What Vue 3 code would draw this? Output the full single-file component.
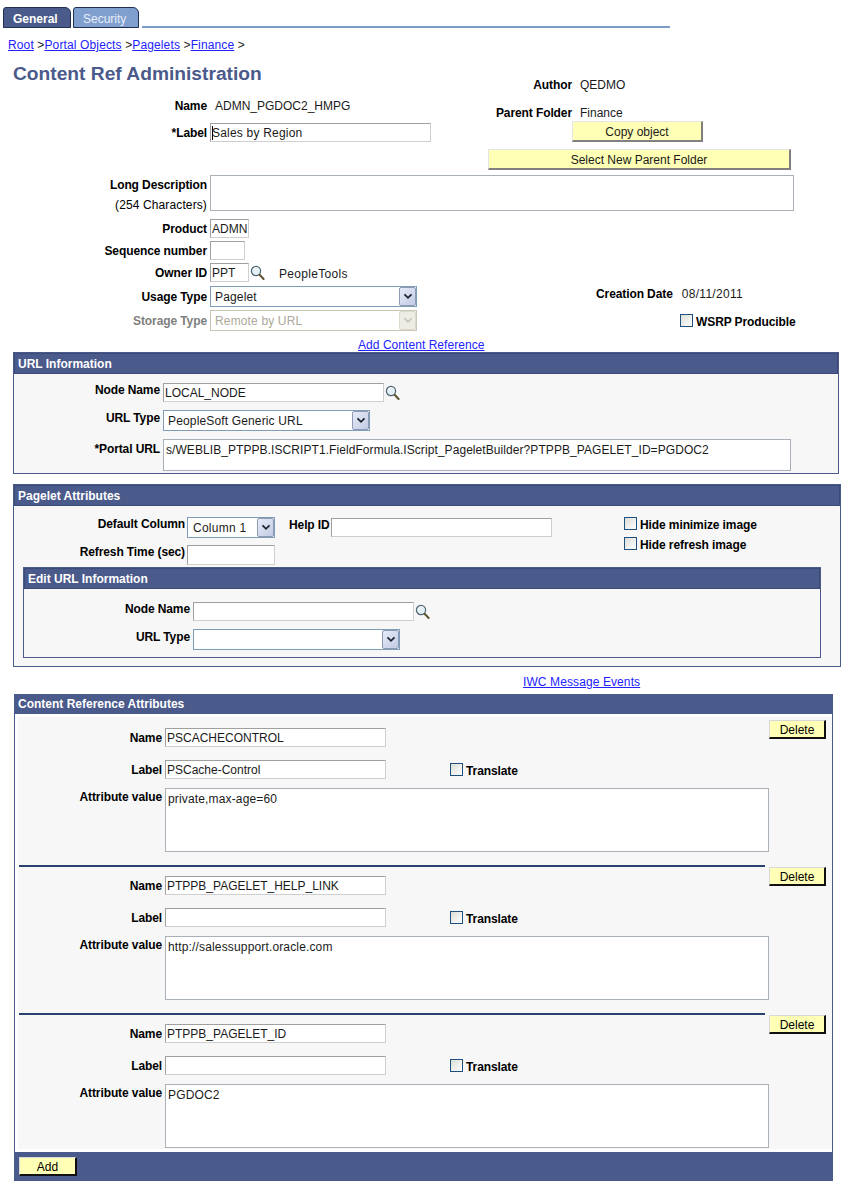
<script setup>
const groups = [
  { name: 'PSCACHECONTROL', label: 'PSCache-Control', value: 'private,max-age=60' },
  { name: 'PTPPB_PAGELET_HELP_LINK', label: '', value: 'http://salessupport.oracle.com' },
  { name: 'PTPPB_PAGELET_ID', label: '', value: 'PGDOC2' }
]
const portalUrl = 's/WEBLIB_PTPPB.ISCRIPT1.FieldFormula.IScript_PageletBuilder?PTPPB_PAGELET_ID=PGDOC2'
</script>

<template>
  <div class="page">
    <div class="tabs">
      <div class="tab active">General</div>
      <div class="tab">Security</div>
      <div class="tabline"></div>
    </div>

    <div class="crumbs">
      <a>Root</a> &gt;<a>Portal Objects</a> &gt;<a>Pagelets</a> &gt;<a>Finance</a> &gt;
    </div>

    <div class="head">
      <div class="head-left">
        <h1 class="title">Content Ref Administration</h1>
        <div class="row name-row">
          <span class="lbl">Name</span><span class="val">ADMN_PGDOC2_HMPG</span>
        </div>
        <div class="row label-row">
          <span class="lbl">*Label</span>
          <input class="inp w221 caret" value="Sales by Region" readonly />
        </div>
      </div>
      <div class="head-right">
        <div class="pair author"><span class="lbl-r">Author</span><span class="val">QEDMO</span></div>
        <div class="pair parent"><span class="lbl-r">Parent Folder</span><span class="val">Finance</span></div>
        <button class="btn copy">Copy object</button>
        <button class="btn select-parent">Select New Parent Folder</button>
      </div>
    </div>

    <div class="form-rows">
      <div class="row long">
        <span class="lbl plain">Long Description<br />(254 Characters)</span>
        <textarea class="area long-area" readonly></textarea>
      </div>
      <div class="row mt8">
        <span class="lbl">Product</span>
        <input class="inp w39" value="ADMN" readonly />
      </div>
      <div class="row mt3">
        <span class="lbl">Sequence number</span>
        <input class="inp w35" readonly />
      </div>
      <div class="row mt3">
        <span class="lbl">Owner ID</span>
        <input class="inp w39" value="PPT" readonly />
        <svg class="lens" viewBox="0 0 15 16"><circle cx="6" cy="6" r="4.6" fill="#e4f0f5" stroke="#4a6272" stroke-width="1.2" /><path d="M3.5 5a3 3 0 0 1 3-2.4" fill="none" stroke="#fff" /><path d="M9.6 9.8 13.6 14" stroke="#5c5330" stroke-width="2" stroke-linecap="round" /></svg>
        <span class="val owner">PeopleTools</span>
      </div>
      <div class="row mt4">
        <span class="lbl lower">Usage Type</span>
        <div class="sel w207"><span>Pagelet</span><i class="arrow"><svg viewBox="0 0 11 8"><path d="M1.5 1.5 5.5 5.5 9.5 1.5" fill="none" stroke="#1c2430" stroke-width="2" /></svg></i></div>
        <div class="created"><span class="bold">Creation Date</span><span class="val date">08/11/2011</span></div>
      </div>
      <div class="row mt3">
        <span class="lbl muted lower">Storage Type</span>
        <div class="sel w207 disabled"><span>Remote by URL</span><i class="arrow"><svg viewBox="0 0 11 8"><path d="M1.5 1.5 5.5 5.5 9.5 1.5" fill="none" stroke="#c9c7ba" stroke-width="2" /></svg></i></div>
        <label class="check wsrp"><input type="checkbox" class="cb" /><span>WSRP Producible</span></label>
      </div>
      <div class="add-link"><a>Add Content Reference</a></div>
    </div>

    <section class="box url-box">
      <div class="box-head">URL Information</div>
      <div class="url-body">
        <div class="row">
          <span class="lbl top-0">Node Name</span>
          <input class="inp w221" value="LOCAL_NODE" readonly />
          <svg class="lens tight" viewBox="0 0 15 16"><circle cx="6" cy="6" r="4.6" fill="#e4f0f5" stroke="#4a6272" stroke-width="1.2" /><path d="M3.5 5a3 3 0 0 1 3-2.4" fill="none" stroke="#fff" /><path d="M9.6 9.8 13.6 14" stroke="#5c5330" stroke-width="2" stroke-linecap="round" /></svg>
        </div>
        <div class="row mt8">
          <span class="lbl top-1">URL Type</span>
          <div class="sel w207"><span>PeopleSoft Generic URL</span><i class="arrow"><svg viewBox="0 0 11 8"><path d="M1.5 1.5 5.5 5.5 9.5 1.5" fill="none" stroke="#1c2430" stroke-width="2" /></svg></i></div>
        </div>
        <div class="row mt8">
          <span class="lbl top-3">*Portal URL</span>
          <textarea class="area portal" :value="portalUrl" readonly></textarea>
        </div>
      </div>
    </section>

    <section class="box pagelet-box">
      <div class="box-head">Pagelet Attributes</div>
      <div class="pagelet-body">
        <div class="pagelet-top">
          <div class="pagelet-fields">
            <div class="row">
              <span class="lbl top-0">Default Column</span>
              <div class="sel w88"><span>Column 1</span><i class="arrow"><svg viewBox="0 0 11 8"><path d="M1.5 1.5 5.5 5.5 9.5 1.5" fill="none" stroke="#1c2430" stroke-width="2" /></svg></i></div>
              <span class="help-lbl bold">Help ID</span>
              <input class="inp w221 help-inp" readonly />
            </div>
            <div class="row mt7">
              <span class="lbl top-0">Refresh Time (sec)</span>
              <input class="inp w88" readonly />
            </div>
          </div>
          <div class="pagelet-checks">
            <label class="check"><input type="checkbox" class="cb" /><span>Hide minimize image</span></label>
            <label class="check second"><input type="checkbox" class="cb" /><span>Hide refresh image</span></label>
          </div>
        </div>
        <section class="box edit-box">
          <div class="box-head">Edit URL Information</div>
          <div class="edit-body">
            <div class="row">
              <span class="lbl top-0">Node Name</span>
              <input class="inp w221" readonly />
              <svg class="lens tight" viewBox="0 0 15 16"><circle cx="6" cy="6" r="4.6" fill="#e4f0f5" stroke="#4a6272" stroke-width="1.2" /><path d="M3.5 5a3 3 0 0 1 3-2.4" fill="none" stroke="#fff" /><path d="M9.6 9.8 13.6 14" stroke="#5c5330" stroke-width="2" stroke-linecap="round" /></svg>
            </div>
            <div class="row mt8">
              <span class="lbl top-1">URL Type</span>
              <div class="sel w207"><span></span><i class="arrow"><svg viewBox="0 0 11 8"><path d="M1.5 1.5 5.5 5.5 9.5 1.5" fill="none" stroke="#1c2430" stroke-width="2" /></svg></i></div>
            </div>
          </div>
        </section>
      </div>
    </section>

    <div class="iwc"><a>IWC Message Events</a></div>

    <section class="attr-box">
      <div class="box-head attr-head">Content Reference Attributes</div>
      <div class="attr-body">
        <div v-for="(g, i) in groups" :key="g.name" class="group">
          <div class="group-main" :class="{ last: i === groups.length - 1 }">
            <div class="row">
              <span class="lbl">Name</span>
              <input class="inp w221" :value="g.name" readonly />
            </div>
            <div class="row mt13">
              <span class="lbl">Label</span>
              <input class="inp w221" :value="g.label" readonly />
              <label class="check translate"><input type="checkbox" class="cb" /><span>Translate</span></label>
            </div>
            <div class="row mt9">
              <span class="lbl top-2">Attribute value</span>
              <textarea class="area attr-area" :value="g.value" readonly></textarea>
            </div>
          </div>
          <button class="btn2 del" :class="{ first: i === 0 }">Delete</button>
        </div>
      </div>
      <div class="attr-foot"><button class="btn2 add">Add</button></div>
    </section>
  </div>
</template>

<style scoped>
.page {
  width: 854px;
  height: 1193px;
  background: #fff;
  color: #000;
  font: 12px/14px "Liberation Sans", Arial, sans-serif;
  overflow: hidden;
  box-sizing: border-box;
  padding-top: 7px;
}
.tabs { display: flex; height: 21px; padding-left: 3px; }
.tab {
  width: 66px;
  box-sizing: border-box;
  margin-right: 2px;
  padding: 4px 0 0 9px;
  background: #7f9fcf;
  color: #e8eef8;
  border: 1px solid #1f2f50;
  border-bottom: 1px solid #1f2f50;
  border-radius: 3px 6px 0 0;
}
.tab.active {
  width: 68px;
  background: #4a5a8a;
  color: #fff;
  font-weight: bold;
}
.tabline {
  width: 528px;
  height: 2px;
  margin: 19px 0 0 1px;
  background: #7b9cc4;
}
.crumbs { margin-top: 10px; padding-left: 8px; height: 14px; white-space: pre-wrap; color: #222; letter-spacing: .13px; }
a { color: #2222ff; text-decoration: underline; }
.add-link a { letter-spacing: .05px; }
.iwc a { letter-spacing: .1px; }
.head { display: flex; margin-top: 9px; }
.head-left { width: 488px; }
.title { margin: 0; padding: 1px 0 0 13px; font-size: 19.2px; line-height: 24px; font-weight: bold; color: #4a5a8a; }
.name-row { margin-top: 13px; height: 14px; }
.label-row { margin-top: 10px; }
.row { display: flex; align-items: center; }
.lbl {
  width: var(--lw, 207px);
  margin-right: 3px;
  flex: none;
  text-align: right;
  font-weight: bold;
  letter-spacing: -.1px;
}
.lbl.plain { line-height: 20px; align-self: flex-start; margin-top: -1px; padding-top: 1px; font-weight: normal; letter-spacing: .12px; }
.plain::first-line { font-weight: bold; letter-spacing: -.1px; }
.muted { color: #808080; }
.lower { padding-top: 1px; }
.top-0, .top-1, .top-2, .top-3 { align-self: flex-start; }
.top-1 { margin-top: 1px; }
.top-2 { margin-top: 2px; }
.top-3 { margin-top: 3px; }
.val { color: #1a1a1a; }
.name-row .val { margin-left: 5px; }
.bold { font-weight: bold; letter-spacing: -.1px; }
.inp {
  box-sizing: border-box;
  height: 19px;
  padding: 0 1px;
  margin: 0;
  border: 1px solid;
  border-color: #a0a0a0 #cfcfcf #cfcfcf #a0a0a0;
  background: #fff;
  color: #1a1a1a;
  font: 12px "Liberation Sans", Arial, sans-serif;
  outline: none;
  border-radius: 0;
}
.w221 { width: 221px; }
.w39 { width: 39px; }
.w35 { width: 35px; }
.w88 { width: 88px; height: 20px; }
.caret {
  background: linear-gradient(#000, #000) 1px 2px / 1px 14px no-repeat #fff;
  letter-spacing: .2px;
}
.head-right { width: 320px; }
.pair { display: flex; }
.lbl-r { width: 84px; text-align: right; font-weight: bold; margin-right: 8px; flex: none; letter-spacing: -.1px; }
.author { margin-top: 17px; }
.parent { margin-top: 14px; }
.btn {
  display: block;
  box-sizing: border-box;
  height: 21px;
  padding: 1px 0 0;
  background: #ffffb5;
  color: #1a1a1a;
  border: 1px solid;
  border-width: 1px 2px 2px 1px;
  border-color: #e4e4e4 #808080 #808080 #e4e4e4;
  font: 12px "Liberation Sans", Arial, sans-serif;
}
.copy { width: 131px; margin: 1px 0 0 84px; }
.select-parent { width: 303px; margin-top: 7px; }
.form-rows { margin-top: 5px; }
.long { height: 36px; }
.area {
  display: block;
  box-sizing: border-box;
  flex: none;
  margin: 0;
  padding: 1px 2px;
  resize: none;
  overflow: hidden;
  border: 1px solid #a9b0b8;
  background: #fff;
  color: #1a1a1a;
  font: 12px/16px "Liberation Sans", Arial, sans-serif;
  outline: none;
  border-radius: 0;
}
.long-area { width: 584px; height: 36px; }
.mt3 { margin-top: 3px; }
.mt4 { margin-top: 4px; }
.mt7 { margin-top: 7px; }
.mt8 { margin-top: 8px; }
.mt9 { margin-top: 9px; }
.mt13 { margin-top: 13px; }
.lens { width: 15px; height: 16px; margin-left: 1px; flex: none; }
.tight { margin-left: 1px; }
.owner { margin-left: 14px; margin-top: 2px; letter-spacing: .3px; }
.sel {
  box-sizing: border-box;
  position: relative;
  flex: none;
  height: 21px;
  border: 1px solid #7f9db9;
  background: #fff;
  color: #1a1a1a;
  line-height: 21px;
  padding-left: 4px;
  display: flex;
  justify-content: space-between;
  letter-spacing: .15px;
}
.w207 { width: 207px; }
.sel.w88 { width: 88px; height: 21px; padding-left: 5px; letter-spacing: .25px; }
.arrow {
  width: 17px;
  height: 19px;
  box-sizing: border-box;
  flex: none;
  border: 1px solid #8e9bb5;
  border-radius: 2px;
  background: linear-gradient(135deg, #e6ebf7, #c2cbe4);
  display: flex;
  align-items: center;
  justify-content: center;
}
.arrow svg { width: 10px; height: 7px; }
.disabled { border-color: #c9c7ba; color: #aca899; }
.disabled .arrow { border-color: #dcdacb; background: #eeede5; }
.created { margin-left: 179px; margin-top: -5px; display: flex; }
.date { margin-left: 9px; letter-spacing: .3px; }
.check { display: flex; align-items: flex-start; font-weight: bold; letter-spacing: -.1px; }
.cb {
  appearance: none;
  -webkit-appearance: none;
  box-sizing: border-box;
  flex: none;
  width: 13px;
  height: 13px;
  margin: 0 3px 0 0;
  border: 1px solid #1c5180;
  border-radius: 0;
  background: linear-gradient(135deg, #dcdcd7, #fff);
}
.check span { padding-top: 1px; }
.wsrp { margin-left: 263px; margin-top: 1px; }
.add-link { margin: 7px 0 0 358px; height: 14px; }
.box {
  box-sizing: border-box;
  border: 1px solid #4a5a8a;
  background: #f7f7f7;
}
.box-head {
  box-sizing: border-box;
  height: 21px;
  padding: 3px 0 0 3px;
  background: #4a5a8a;
  color: #fff;
  font-weight: bold;
  border: 1px solid #3b4a78;
}
.url-box { margin: 0 0 0 13px; width: 826px; }
.url-body { --lw: 146px; padding: 9px 0 2px; }
.portal { width: 628px; height: 32px; padding: 2px; letter-spacing: .07px; }
.pagelet-box { margin: 10px 0 0 13px; width: 828px; }
.pagelet-body { padding: 11px 0 8px; }
.pagelet-top { display: flex; }
.pagelet-fields { width: 610px; --lw: 171px; }
.pagelet-fields .lbl { margin-right: 2px; }
.help-lbl { width: 40px; text-align: right; flex: none; white-space: nowrap; margin: 1px 2px 0 14px; align-self: flex-start; }
.pagelet-checks .second { margin-top: 5px; }
.edit-box { margin: 2px 0 0 9px; width: 798px; }
.edit-body { --lw: 166px; padding: 13px 0 7px; }
.iwc { margin: 8px 0 0 523px; height: 14px; }
.attr-box {
  box-sizing: border-box;
  margin: 5px 0 0 14px;
  width: 819px;
  border-left: 1px solid #4a5a8a;
  border-right: 1px solid #4a5a8a;
}
.attr-head { height: 20px; padding: 3px 0 0 4px; border: 0; margin: 0 -1px; }
.attr-body {
  margin: 3px 0 3px 3px;
  padding-top: 2px;
  background: #f7f7f7;
}
.group { display: flex; align-items: flex-start; }
.group-main {
  box-sizing: border-box;
  width: 746px;
  height: 148px;
  margin-left: 1px;
  padding-top: 9px;
  border-bottom: 2px solid #2c4170;
  --lw: 143px;
}
.group-main.last { height: 134px; border-bottom: 0; }
.attr-area { width: 604px; height: 64px; padding: 2px 2px; letter-spacing: .15px; }
.translate { margin-left: 64px; margin-top: 2px; }
.btn2 {
  box-sizing: border-box;
  flex: none;
  padding: 1px 0 0;
  background: #ffffb5;
  color: #000;
  border: 1px solid;
  border-width: 1px 2px 2px 1px;
  border-color: #d8d8d8 #101010 #101010 #d8d8d8;
  font: 12px "Liberation Sans", Arial, sans-serif;
}
.del { width: 57px; height: 19px; margin: 0 0 0 4px; }
.del.first { margin-top: 1px; }
.attr-foot { height: 29px; padding: 5px 0 0 5px; box-sizing: border-box; background: #4a5a8a; margin: 0 -1px; }
.add { width: 58px; height: 19px; }
</style>
